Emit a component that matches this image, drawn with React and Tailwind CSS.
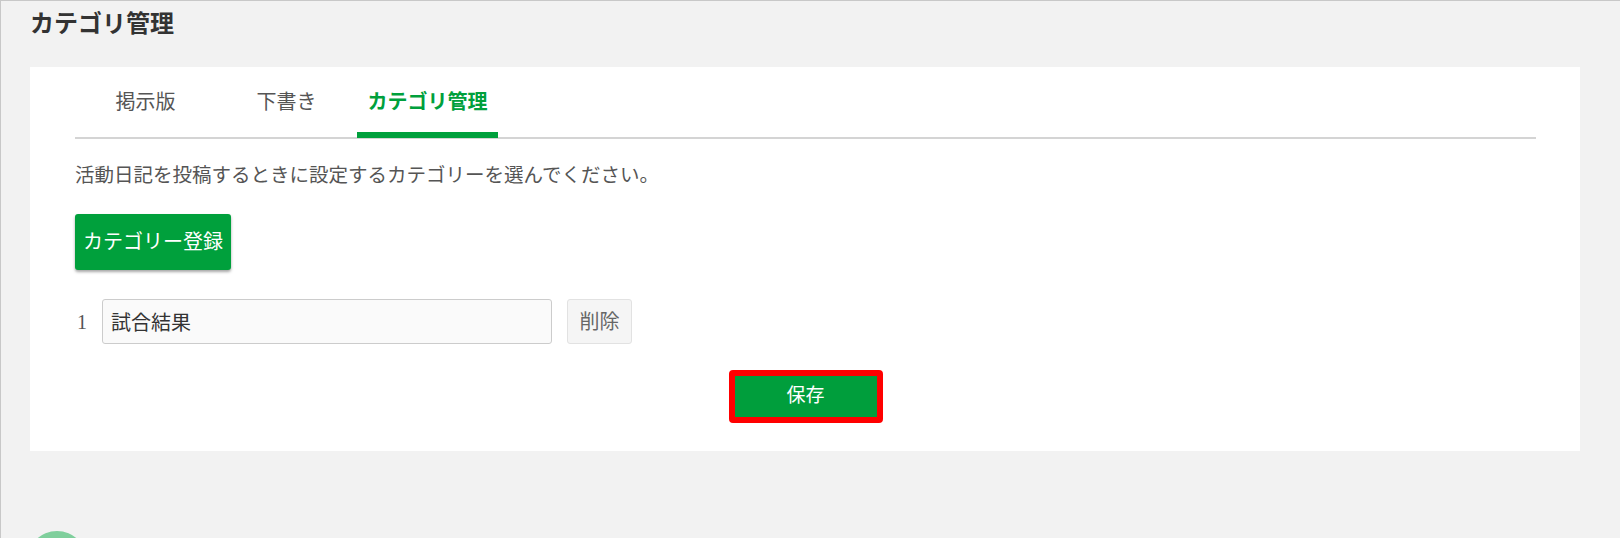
import React, { useState } from "react";

const tabs = ["掲示版", "下書き", "カテゴリ管理"];

export default function App() {
  const [active, setActive] = useState(2);
  const [categories, setCategories] = useState(["試合結果"]);

  return (
    <div
      className="h-[538px] overflow-hidden bg-[#f2f2f2] border-t border-l border-[#c8c8c8] pl-[29px] pr-[40px]"
      style={{ fontFamily: '"Liberation Sans", "Noto Sans CJK JP", sans-serif' }}
    >
      <h1 className="pt-[7px] text-[24px] leading-[32px] font-bold text-[#333]">
        カテゴリ管理
      </h1>

      <div className="mt-[27px] bg-white pl-[45px] pr-[44px] pb-[28px]">
        <div className="flex border-b-2 border-[#d4d4d4]">
          {tabs.map((tab, i) => (
            <button
              key={tab}
              onClick={() => setActive(i)}
              className={`relative w-[141px] h-[70px] flex items-center justify-center text-[20px] ${
                i === active ? "font-bold text-[#00a03c]" : "text-[#555]"
              }`}
            >
              {tab}
              {i === active && (
                <span className="absolute left-0 right-0 bottom-[-1px] h-[6px] bg-[#00a03c]" />
              )}
            </button>
          ))}
        </div>

        <p className="mt-[22px] text-[19.5px] leading-[28px] text-[#555]">
          活動日記を投稿するときに設定するカテゴリーを選んでください。
        </p>

        <button
          onClick={() => setCategories([...categories, ""])}
          className="mt-[25px] h-[56px] w-[156px] rounded-[3px] bg-[#00a03c] text-[20px] text-white shadow-[0_2px_3px_rgba(0,0,0,0.35)]"
        >
          カテゴリー登録
        </button>

        <div className="mt-[29px] flex flex-col gap-3">
          {categories.map((cat, i) => (
            <div key={i} className="flex items-center">
              <span
                className="w-[27px] pl-[2px] text-[20px] text-[#555]"
                style={{ fontFamily: '"Liberation Serif", serif' }}
              >
                {i + 1}
              </span>
              <input
                value={cat}
                onChange={(e) => {
                  const next = [...categories];
                  next[i] = e.target.value;
                  setCategories(next);
                }}
                className="h-[45px] w-[450px] rounded-[3px] border border-[#cccccc] bg-[#fafafa] px-[8px] text-[20px] text-[#333] outline-none"
              />
              <button
                onClick={() => setCategories(categories.filter((_, j) => j !== i))}
                className="ml-[15px] h-[45px] w-[65px] rounded-[3px] border border-[#e2e2e2] bg-[#f5f5f5] text-[20px] text-[#666]"
              >
                削除
              </button>
            </div>
          ))}
        </div>

        <div className="mt-[26px] flex justify-center">
          <button className="h-[53px] w-[154px] rounded-[4px] border-[6px] border-[#ff0000] bg-[#009e3c] text-[19px] text-white">
            保存
          </button>
        </div>
      </div>

      <div className="mt-[80px] ml-[-3px] h-[60px] w-[60px] rounded-full bg-[#7fcf9c]" />
    </div>
  );
}
